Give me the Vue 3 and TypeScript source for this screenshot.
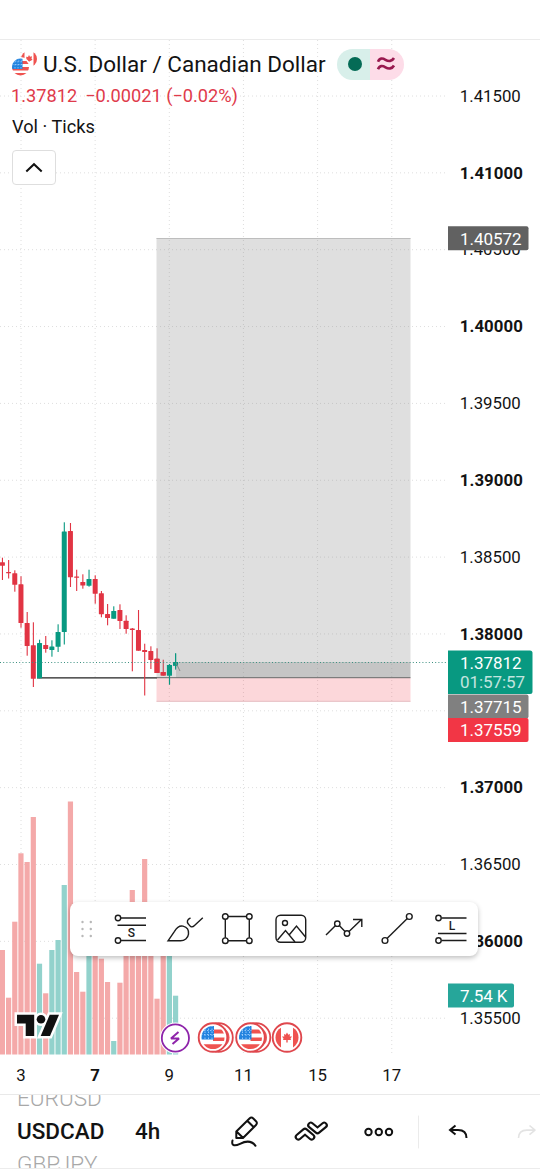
<script setup lang="ts">
type Candle = [high: number, top: number, bottom: number, low: number, up: 0 | 1, volume: number]

const candles: Candle[] = [
  [557.7, 562.3, 565.7, 580, 0, 950],
  [560, 572, 573.3, 578.5, 0, 997.7],
  [570.3, 573.3, 584.7, 591.7, 0, 921.7],
  [576.3, 584.3, 623, 627.7, 0, 853.3],
  [612, 623, 646, 655.7, 0, 862],
  [622.3, 645.3, 678.7, 687, 0, 817],
  [639.7, 643, 678.3, 678.3, 1, 963.7],
  [636, 645, 649, 652.7, 0, 993.3],
  [640.3, 646.5, 650, 656.7, 1, 950],
  [624.3, 632, 646.7, 652, 1, 940],
  [522.3, 531.5, 632, 644.5, 1, 885],
  [523, 531, 577.3, 587, 0, 801.5],
  [569.7, 576.5, 577.7, 591, 0, 972],
  [574.3, 582, 585.5, 588.7, 0, 991.7],
  [569.7, 579, 585.7, 586.7, 1, 945],
  [575.3, 579, 593.7, 603.7, 0, 930],
  [591, 593.3, 614.3, 617.3, 0, 958.7],
  [604, 614, 618, 625.3, 0, 982],
  [606.3, 611, 618.7, 618.7, 1, 1041],
  [604.3, 610, 621, 629, 0, 982.7],
  [615.3, 620.7, 629, 633.7, 0, 950],
  [628, 628.5, 630, 671.3, 0, 890],
  [610, 630, 650.7, 650.7, 0, 940],
  [643.7, 650, 652, 695.5, 0, 859],
  [646.3, 651, 660, 669, 0, 935],
  [648.3, 658.7, 673, 673, 0, 998.7],
  [659.7, 672, 675.5, 675.7, 0, 945],
  [664, 665, 675.5, 684.5, 1, 940],
  [653.3, 662.3, 665.7, 669.7, 1, 995.7],
]
const candleX = (i: number) => 2.4 + i * 6.185
const volumeFloor = 1054.5

const prices = ['1.41500', '1.41000', '1.40500', '1.40000', '1.39500', '1.39000', '1.38500', '1.38000', '', '1.37000', '1.36500', '1.36000', '1.35500']
const priceY = (i: number) => 96 + i * 76.85
const days = ['3', '7', '9', '11', '15', '17']
const dayX = (i: number) => 21 + i * 74.15

const tags = [
  { y: 226.3, w: 80.5, h: 24, fill: '#616161', text: '1.40572' },
  { y: 694.5, w: 80.5, h: 24, fill: '#808080', text: '1.37715' },
  { y: 718, w: 80.5, h: 24, fill: '#f23645', text: '1.37559' },
  { y: 983.5, w: 66, h: 24, fill: '#26a69a', text: '7.54 K' },
]
const usEvents = [213, 250.5]
</script>

<template>
  <main class="screen">
    <section class="chart">
      <svg class="plot" width="540" height="1054" viewBox="0 40 540 1054">
        <g class="grid">
          <line v-for="(_, i) in days" :key="'d' + i" :x1="dayX(i)" :x2="dayX(i)" y1="40" y2="1055" />
          <line v-for="(_, i) in prices" :key="'p' + i" x1="0" x2="447" :y1="priceY(i)" :y2="priceY(i)" />
        </g>
        <rect
          v-for="(c, i) in candles" :key="'v' + i" :x="candleX(i) - 2.6" :y="c[5]" width="5.2"
          :height="volumeFloor - c[5]" :fill="c[4] ? '#92d2cc' : '#f4a9a9'"
        />
        <line x1="37" x2="157" y1="677.8" y2="677.8" stroke="#222" stroke-width="1.2" />
        <g v-for="(c, i) in candles" :key="'c' + i" :fill="c[4] ? '#089981' : '#e13443'">
          <rect :x="candleX(i) - 0.5" :y="c[0]" width="1.1" :height="c[3] - c[0]" />
          <rect :x="candleX(i) - 2.5" :y="c[1]" width="5" :height="c[2] - c[1]" rx="0.5" />
        </g>
        <rect x="156.5" y="238" width="254" height="439.5" fill="#808080" fill-opacity=".25" />
        <rect x="176" y="662" width="234.5" height="15.5" fill="#808080" fill-opacity=".27" />
        <rect x="156.5" y="678" width="254" height="23.5" fill="#f23645" fill-opacity=".2" />
        <line x1="156.5" x2="410.5" y1="238.5" y2="238.5" stroke="#bdbdbd" />
        <line x1="156.5" x2="410.5" y1="677.7" y2="677.7" stroke="#666" />
        <line x1="156.5" x2="410.5" y1="701.3" y2="701.3" stroke="#e5bfc2" />
        <g v-for="i in [25, 26]" :key="'r' + i" fill="#e13443">
          <rect :x="candleX(i) - 2.5" :y="candles[i][1]" width="5" :height="candles[i][2] - candles[i][1]" />
        </g>
        <g fill="#089981">
          <rect x="167" y="665" width="5" height="10.5" /><rect x="173" y="662" width="5" height="3.6" />
          <rect x="169" y="664" width="1.1" height="20.5" /><rect x="175" y="653.5" width="1.1" height="15" />
        </g>
        <path d="M176 663l4 8" stroke="#888" fill="none" />
        <line x1="0" x2="447" y1="662.5" y2="662.5" stroke="#3c9080" stroke-dasharray="1 2.2" />

        <g class="label">
          <template v-for="(p, i) in prices" :key="'t' + i">
            <text
              v-if="p" x="459.8" :y="priceY(i) + 5.7" :class="{ strong: p.endsWith('000') }"
              :textLength="p.endsWith('000') ? 63 : 61"
            >{{ p }}</text>
          </template>
          <text v-for="(d, i) in days" :key="d" :x="dayX(i)" y="1081.3" text-anchor="middle" :class="{ strong: d === '7' }">{{ d }}</text>
        </g>
        <g class="tag">
          <g v-for="t in tags" :key="t.text">
            <path :d="`M448 ${t.y}h${t.w - 2}q2 0 2 2v${t.h - 4}q0 2-2 2h-${t.w - 2}z`" :fill="t.fill" />
            <text x="460" :y="t.y + 18.4" :textLength="t.text === '7.54 K' ? 47.5 : 61.5">{{ t.text }}</text>
          </g>
          <path d="M448 650.5h82q2.500 0 2.500 2.500v38.500q0 2.500-2.500 2.500h-82z" fill="#089981" />
          <text x="460" y="669.2" textLength="61.500">1.37812</text>
          <text x="460" y="688.3" textLength="65" opacity=".75">01:57:57</text>
        </g>

        <g v-for="layer in ['halo', 'mark']" :key="layer" :class="layer">
          <path d="M17 1014.800h17.200v21.200h-8.500v-12.600H17z" />
          <path d="M49.700 1014.800h9.300l-9 21.200h-9.300z" />
          <circle cx="41" cy="1019.200" r="4.300" />
        </g>

        <circle cx="175.400" cy="1038" r="15.500" fill="#fff" />
        <circle cx="175.400" cy="1038" r="13.600" fill="#fff" stroke="#8e24aa" stroke-width="1.800" />
        <path d="M178.500 1032l-7.500 6.500h8l-6.500 5.500" fill="none" stroke="#8e24aa" stroke-width="2" stroke-linejoin="bevel" />
        <defs>
          <clipPath id="round"><circle r="11.500" /></clipPath>
        </defs>
        <g v-for="x in usEvents" :key="x">
          <circle :cx="x + 5.500" cy="1037.500" r="14.300" fill="#fff" stroke="#df474d" stroke-width="1.800" />
          <circle :cx="x + 5.500" cy="1037.500" r="11" fill="#ec5558" />
          <circle :cx="x" cy="1037.500" r="14.300" fill="#fff" stroke="#df474d" stroke-width="1.900" />
          <g :transform="`translate(${x} 1037.5)`" clip-path="url(#round)">
            <path d="M0-8h12v4H0zM0 0h12v3.500H0zM-12 6.800h24v6h-24z" fill="#ef5350" />
            <path d="M-12-12H1V2h-13z" fill="#2384df" />
            <path d="M-8-12V2M-4.500-12V2M-1-12V2M-12-7H1M-12-3H1" stroke="#a7d4ff" stroke-width=".8" stroke-dasharray="1.500 1.500" />
          </g>
        </g>
        <circle cx="287" cy="1037.500" r="14.300" fill="#fff" stroke="#df474d" stroke-width="1.900" />
        <g transform="translate(287 1037.5)">
          <path clip-path="url(#round)" d="M-12-12h6v24h-6zM6-12h6v24H6z" fill="#ef5350" />
          <path d="M0-5l1.300 2.300L3-3.500l-.3 2.500L5-1 3.500 1l.5 1.500H.7V5H-.7V2.500H-4L-3.500 1-5-1l2.300 0L-3-3.500l1.700.8z" fill="#ef5350" />
        </g>
      </svg>

      <header class="legend">
        <div class="title-row">
          <svg class="pair" width="26" height="26" viewBox="0 0 26 26">
            <defs>
              <clipPath id="us"><circle cx="8.500" cy="16" r="8.500" /></clipPath>
              <clipPath id="ca"><circle cx="17" cy="8" r="8" /></clipPath>
            </defs>
            <g clip-path="url(#ca)">
              <path d="M8 0h4.500v16H8zM21.500 0H26v16h-4.500z" fill="#ef5350" />
              <path d="M17 4l1 1.800 2-.5-.5 2.500 1 1-3.500 2-3-2.500.5-1-.5-1.500 2 .2z" fill="#ef5350" />
            </g>
            <circle cx="8.500" cy="16" r="10" fill="#fff" />
            <g clip-path="url(#us)">
              <path d="M8 10h10v3H8zM0 16h18v3.500H0zM0 22h18v4H0z" fill="#ef5350" />
              <path d="M0 6h10.500v12H0z" fill="#2384df" />
              <path d="M3 7v11M6 7v11M9 7v11M0 10h10M0 13.500h10" stroke="#a7d4ff" stroke-width=".7" stroke-dasharray="1.500 1.500" />
            </g>
          </svg>
          <h1>U.S. Dollar / Canadian Dollar</h1>
          <div class="status">
            <span class="open"><i /></span>
            <span class="approx">
              <svg width="20" height="16" viewBox="0 0 20 16">
                <path d="M2 5.800C3.500 1.800 6.500 2 9.500 3.800S16 5.500 18 2M2 13.300C3.500 9.300 6.500 9.500 9.500 11.300S16 13 18 9.500" fill="none" stroke="#99194f" stroke-width="2.600" />
              </svg>
            </span>
          </div>
        </div>
        <p class="change"><span>1.37812</span><span>−0.00021 (−0.02%)</span></p>
        <p class="volume">Vol · Ticks</p>
        <button class="collapse" aria-label="Collapse">
          <svg width="20" height="14" viewBox="0 0 20 14"><path d="M2.300 10.500L10 3.200l7.700 7.300" fill="none" stroke="#111" stroke-width="2" /></svg>
        </button>
      </header>

      <nav class="tools">
        <svg width="408" height="54" viewBox="70 902 408 54" fill="none" stroke="#1c1c1c" stroke-width="1.400">
          <g fill="#b8b8b8" stroke="none">
            <template v-for="y in [922, 929, 936]" :key="y">
              <circle cx="82.500" :cy="y" r="1.200" /><circle cx="90.800" :cy="y" r="1.200" />
            </template>
          </g>
          <path d="M121 918h25M117.500 925.200H146M121 940.500h25" />
          <circle cx="118" cy="918" r="2.700" /><circle cx="118" cy="940.500" r="2.700" />
          <text x="131.500" y="937.300" text-anchor="middle" class="glyph">S</text>
          <path d="M168 940.800l6.500-9.500c3-5 6-5.800 8.500-5.200 4 1 6 4 5.500 8-.5 4-4 6.700-8 6.700zM190.500 918c-3.500 1.500-4 4-2 6.200 1.500 2.500 3.500 3.800 6 1.300l8.300-7.700" />
          <path d="M228 916.500h18.500M249.300 919.300v18.500M246.500 940.700H228M225.300 937.800v-18.500" />
          <circle v-for="p in [[225.300, 916.500], [249.300, 916.500], [225.300, 940.700], [249.300, 940.700]]" :key="p.join()" :cx="p[0]" :cy="p[1]" r="2.800" />
          <rect x="276" y="915.200" width="29.700" height="27" rx="4.500" />
          <circle cx="285" cy="923" r="2.500" />
          <path d="M277.500 940l8-9.500 9.500 11.500M289.500 934.500l7-8.500 9 11" />
          <path d="M326 935l9.300-9.200M339.300 925.600l5.700 5.800M349 931.500l12.500-12M353 919.500h8.800v7.500" />
          <circle cx="337.300" cy="923.700" r="2.700" /><circle cx="347" cy="933.500" r="2.700" />
          <path d="M387 938.500l20.300-20" /><circle cx="385" cy="940.500" r="2.900" /><circle cx="409.300" cy="916.500" r="2.900" />
          <path d="M441.500 918h25M438 933.500h28.500M441.500 940.500h25" />
          <circle cx="438.500" cy="918" r="2.700" /><circle cx="438.500" cy="940.500" r="2.700" />
          <text x="452" y="930" text-anchor="middle" class="glyph">L</text>
        </svg>
      </nav>
    </section>

    <footer class="bar">
      <div class="picker">
        <span class="ghost">EURUSD</span>
        <strong>USDCAD</strong>
        <span class="ghost">GBPJPY</span>
      </div>
      <strong class="interval">4h</strong>
      <svg class="actions" width="330" height="73" viewBox="210 1095 330 73" fill="none" stroke="#111" stroke-width="2" stroke-linecap="round" stroke-linejoin="round">
        <path d="M236.300 1138v-6.500l13.200-13c1.200-1.200 2.600-1.200 3.800 0l2.700 2.700c1.200 1.200 1.200 2.600 0 3.800L243 1138zM236.500 1131.500l6.500 6.300M247.500 1121l6.300 6.300" />
        <path d="M232.500 1140.500c-1.500 6 3 5.500 7.500 3.300 6-3 12-2.800 15.500 2" />
        <g v-for="d in ['M298.300 1137l6.700-5.700 6.700 5.700', 'M310.800 1125.200l6.700 5.500 6.700-5.500']" :key="d">
          <path :d="d" stroke-width="7.200" />
          <path :d="d" stroke="#fff" stroke-width="3" />
        </g>
        <circle cx="368.500" cy="1132" r="3.200" /><circle cx="378.800" cy="1132" r="3.200" /><circle cx="389" cy="1132" r="3.200" />
        <path d="M418.500 1116v32" stroke="#ebebeb" stroke-width="1" />
        <path d="M455.500 1125.500l-5.500 4.600 5.500 4.500M450.500 1130.100h7.500c5.500 0 8.500 3 8.500 8" stroke-linecap="butt" stroke-linejoin="miter" />
        <path d="M529.500 1125.500l5.500 4.600-5.500 4.500M534.500 1130.100H527c-5.500 0-8.500 3-8.500 8" stroke="#e3e3e3" stroke-width="1.600" stroke-linecap="butt" />
      </svg>
    </footer>
  </main>
</template>

<style>
body { margin: 0; background: #fff; }
</style>

<style scoped>
.screen { box-sizing: border-box; width: 540px; height: 1170px; padding-top: 39px; display: flex; flex-direction: column; overflow: hidden; background: #fff; color: #131313; font-family: Roboto, "Liberation Sans", sans-serif; }
.chart { position: relative; box-sizing: border-box; height: 1055px; border-top: 1px solid #ebebeb; }
.plot { display: block; }
.grid line { stroke: #dedede; stroke-width: 1; stroke-dasharray: 1 3; }
.label text { font-size: 16.800px; fill: #131313; }
.label .strong { font-weight: 700; }
.tag text { font-size: 17px; fill: #fff; }
.halo { fill: #fff; stroke: #fff; stroke-width: 5; }
.mark { fill: #111; }
.legend { position: absolute; left: 12px; top: 7px; }
.title-row { display: flex; align-items: center; height: 34px; }
.pair { flex: none; margin-right: 5px; }
h1 { margin: 0; width: 283px; font-size: 22.500px; line-height: 34px; font-weight: 400; white-space: nowrap; }
.status { display: flex; width: 67px; height: 31px; margin-left: 11px; border-radius: 16px; overflow: hidden; }
.open, .approx { display: flex; align-items: center; justify-content: center; }
.open { width: 33px; background: #d8efea; }
.open i { width: 14px; height: 14px; margin-left: 2px; border-radius: 50%; background: #056b56; }
.approx { width: 34px; background: #fddce8; }
.approx svg { margin-right: 3px; }
p { margin: 0; white-space: nowrap; }
.change { display: flex; gap: 8px; font-size: 18.200px; line-height: 24px; padding-top: 3px; margin-left: -1px; color: #df3b4b; }
.volume { font-size: 18.200px; line-height: 24px; padding-top: 7px; }
.collapse { display: flex; align-items: center; justify-content: center; width: 44px; height: 35px; padding: 0; margin-top: 11px; border: 1px solid #dedede; border-radius: 4px; background: #fff; }
.tools { position: absolute; left: 70px; top: 862px; width: 408px; height: 54px; border-radius: 8px; background: #fff; box-shadow: 0 2px 5px rgba(0, 0, 0, .25); }
.tools svg { display: block; }
.glyph { font-size: 12px; fill: #1c1c1c; stroke: none; font-weight: 500; }
.bar { box-sizing: border-box; flex: none; height: 75px; display: flex; align-items: stretch; border-top: 1px solid #e9e9e9; border-bottom: 1px solid #ececec; overflow: hidden; }
.picker { width: 118px; padding-left: 17px; height: 73px; display: flex; flex-direction: column; justify-content: center; overflow: hidden; line-height: 33px; box-sizing: border-box; }
.picker strong, .interval { font-size: 22.500px; font-weight: 500; line-height: 33px; }
.ghost { font-size: 22.500px; font-weight: 300; color: #a8a8a8; flex: none; }
.interval { width: 75px; margin-left: 17px; line-height: 73px; }
.actions { flex: none; }
</style>
